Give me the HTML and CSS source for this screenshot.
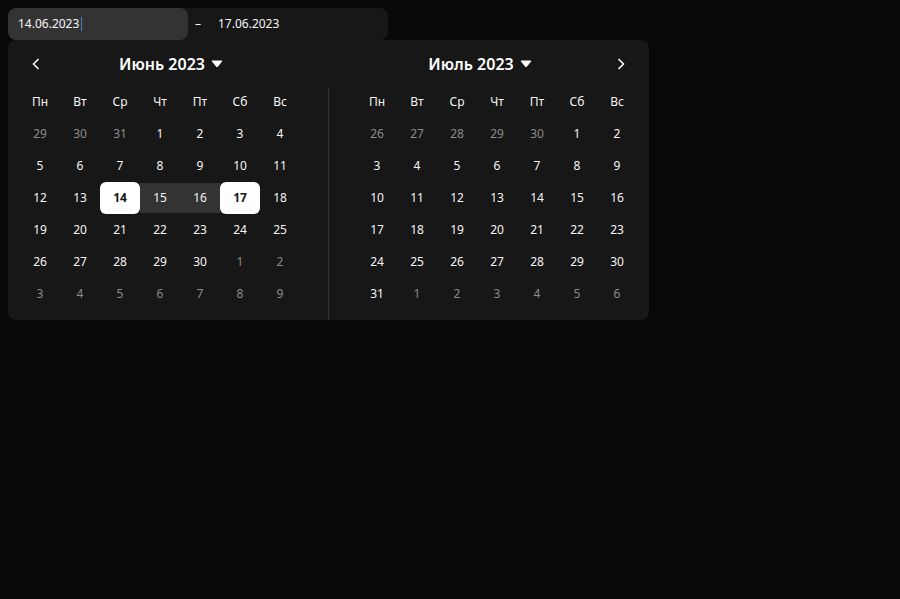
FILE: index.html
```
<!DOCTYPE html>
<html lang="ru">
<head>
<meta charset="utf-8">
<meta name="viewport" content="width=device-width, initial-scale=1">
<title>Выбор периода</title>
<link rel="stylesheet" href="styles.css">
</head>
<body>
<div class="range">
  <div class="field field-active"><input type="text" value="14.06.2023" aria-label="Дата начала"><span class="caret"></span></div>
  <span class="dash">–</span>
  <div class="field"><input type="text" value="17.06.2023" aria-label="Дата окончания"></div>
</div>
<div class="picker">
  <section class="month">
    <header class="head">
      <button class="nav" type="button" aria-label="Предыдущий месяц"><svg width="24" height="24" viewBox="0 0 24 24"><path d="M14.500 7l-5 5 5 5"/></svg></button>
      <button class="title" type="button">Июнь 2023<svg width="12" height="8" viewBox="0 0 12 8"><path d="M1 1h10L6 7z"/></svg></button>
    </header>
    <table class="days" data-start="29" data-prev="31" data-count="30" data-from="14" data-to="17"></table>
  </section>
  <section class="month month-next">
    <header class="head">
      <button class="title" type="button">Июль 2023<svg width="12" height="8" viewBox="0 0 12 8"><path d="M1 1h10L6 7z"/></svg></button>
      <button class="nav" type="button" aria-label="Следующий месяц"><svg width="24" height="24" viewBox="0 0 24 24"><path d="M9.500 7l5 5-5 5"/></svg></button>
    </header>
    <table class="days" data-start="26" data-prev="30" data-count="31"></table>
  </section>
</div>
<script src="calendar.js"></script>
</body>
</html>
```
FILE: styles.css
```
* { box-sizing: border-box; }
body {
  margin: 0;
  padding: 8px;
  background: #080808;
  color: #f5f5f5;
  font: 12px/16px "Noto Sans", sans-serif;
}
button, input { font: inherit; color: inherit; background: none; border: 0; padding: 0; margin: 0; }
button { cursor: pointer; }
.range {
  display: flex;
  align-items: center;
  width: fit-content;
  background: #171717;
  border-radius: 8px;
}
.field { position: relative; width: 180px; height: 32px; border-radius: 8px; }
.field-active { background: #333; }
.field input { width: 100%; height: 100%; padding: 0 10px 2px; outline: 0; }
.caret { position: absolute; left: 73px; top: 9px; width: 1px; height: 14px; background: #4b7fd6; }
.dash { width: 20px; text-align: center; }
.picker {
  display: flex;
  width: fit-content;
  background: #171717;
  border-radius: 8px;
}
.month { width: 320px; padding: 8px 12px 10px; }
.month-next { width: 321px; padding-left: 29px; position: relative; }
.month-next::before {
  content: "";
  position: absolute;
  left: 0;
  top: 48px;
  bottom: 0;
  width: 1px;
  background: #333;
}
.head { display: flex; align-items: center; height: 32px; margin-bottom: 6px; padding: 0 22px 0 4px; }
.month-next .head { gap: 6px; padding: 0 4px 0 0; }
.nav { width: 24px; height: 24px; }
.nav svg { display: block; fill: none; stroke: #fff; stroke-width: 1.5; }
.title {
  flex: 1;
  display: flex;
  align-items: center;
  justify-content: center;
  gap: 6px;
  font-size: 16px;
  line-height: 20px;
  font-weight: 600;
  color: #fff;
}
.title svg { fill: #fff; stroke: #fff; stroke-linejoin: round; }
.days { border-collapse: collapse; table-layout: fixed; width: 280px; }
.days th, .days td { height: 32px; padding: 0; text-align: center; font-weight: 400; }
.days button { display: block; width: 100%; height: 32px; }
.days .outside { color: #8b8b8b; }
.days .between { height: 30px; background: #333; }
.days .selected { background: #fff; color: #171717; font-weight: 700; border-radius: 6px; }
```
FILE: calendar.js
```
const weekdays = ["Пн", "Вт", "Ср", "Чт", "Пт", "Сб", "Вс"];

for (const table of document.querySelectorAll(".days")) {
  const { start, prev, count, from, to } = table.dataset;
  const header = table.createTHead().insertRow();
  for (const name of weekdays) {
    const th = document.createElement("th");
    th.scope = "col";
    th.textContent = name;
    header.append(th);
  }
  const body = table.createTBody();
  const offset = prev - start + 1;
  for (let week = 0; week < 6; week++) {
    const row = body.insertRow();
    for (let column = 0; column < 7; column++) {
      const day = week * 7 + column - offset + 1;
      const button = document.createElement("button");
      button.type = "button";
      button.textContent = day < 1 ? day + Number(prev) : day > count ? day - count : day;
      if (day < 1 || day > count) button.className = "outside";
      else if (day == from || day == to) button.className = "selected";
      else if (day > from && day < to) button.className = "between";
      row.insertCell().append(button);
    }
  }
}
```
